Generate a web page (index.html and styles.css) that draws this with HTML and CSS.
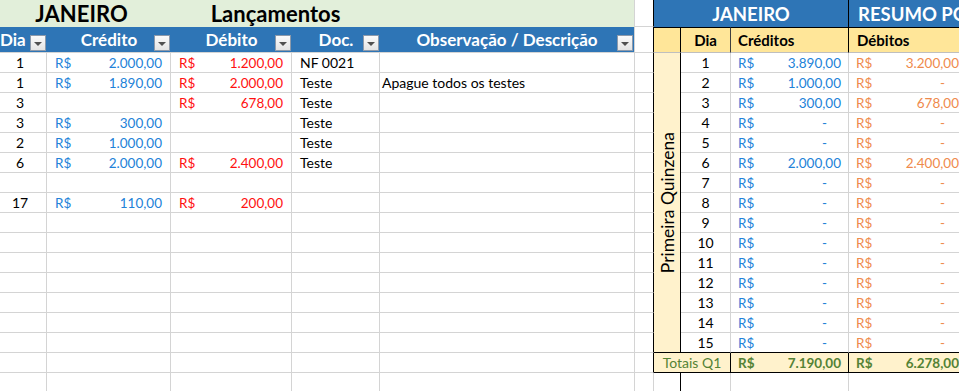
FILE: index.html
```html
<!DOCTYPE html>
<html lang="pt-BR">
<head>
<meta charset="utf-8">
<title>Janeiro - Lançamentos</title>
<link rel="stylesheet" href="styles.css">
</head>
<body>
<div class="page">
  <div class="sheet left">
    <div class="c title t-jan">JANEIRO</div>
    <div class="c title t-lanc">Lançamentos</div>
    <div class="c title t-end"></div>
    <div class="c gap"></div>

    <div class="c hd hd-dia">Dia<span class="filter"></span></div>
    <div class="c hd">Crédito<span class="filter"></span></div>
    <div class="c hd">Débito<span class="filter"></span></div>
    <div class="c hd">Doc.<span class="filter"></span></div>
    <div class="c hd hd-last">Observação / Descrição<span class="filter"></span></div>
    <div class="c gap"></div>

    <div class="c num">1</div>
    <div class="c money cred"><span>R$</span><span>2.000,00</span></div>
    <div class="c money deb"><span>R$</span><span>1.200,00</span></div>
    <div class="c doc">NF 0021</div>
    <div class="c obs"></div>
    <div class="c gap"></div>

    <div class="c num">1</div>
    <div class="c money cred"><span>R$</span><span>1.890,00</span></div>
    <div class="c money deb"><span>R$</span><span>2.000,00</span></div>
    <div class="c doc">Teste</div>
    <div class="c obs">Apague todos os testes</div>
    <div class="c gap"></div>

    <div class="c num">3</div>
    <div class="c money cred"></div>
    <div class="c money deb"><span>R$</span><span>678,00</span></div>
    <div class="c doc">Teste</div>
    <div class="c obs"></div>
    <div class="c gap"></div>

    <div class="c num">3</div>
    <div class="c money cred"><span>R$</span><span>300,00</span></div>
    <div class="c money deb"></div>
    <div class="c doc">Teste</div>
    <div class="c obs"></div>
    <div class="c gap"></div>

    <div class="c num">2</div>
    <div class="c money cred"><span>R$</span><span>1.000,00</span></div>
    <div class="c money deb"></div>
    <div class="c doc">Teste</div>
    <div class="c obs"></div>
    <div class="c gap"></div>

    <div class="c num">6</div>
    <div class="c money cred"><span>R$</span><span>2.000,00</span></div>
    <div class="c money deb"><span>R$</span><span>2.400,00</span></div>
    <div class="c doc">Teste</div>
    <div class="c obs"></div>
    <div class="c gap"></div>

    <div class="c num"></div><div class="c"></div><div class="c"></div><div class="c"></div><div class="c"></div><div class="c gap"></div>

    <div class="c num">17</div>
    <div class="c money cred"><span>R$</span><span>110,00</span></div>
    <div class="c money deb"><span>R$</span><span>200,00</span></div>
    <div class="c doc"></div>
    <div class="c obs"></div>
    <div class="c gap"></div>

    <div class="c num"></div><div class="c"></div><div class="c"></div><div class="c"></div><div class="c"></div><div class="c gap"></div>
    <div class="c num"></div><div class="c"></div><div class="c"></div><div class="c"></div><div class="c"></div><div class="c gap"></div>
    <div class="c num"></div><div class="c"></div><div class="c"></div><div class="c"></div><div class="c"></div><div class="c gap"></div>
    <div class="c num"></div><div class="c"></div><div class="c"></div><div class="c"></div><div class="c"></div><div class="c gap"></div>
    <div class="c num"></div><div class="c"></div><div class="c"></div><div class="c"></div><div class="c"></div><div class="c gap"></div>
    <div class="c num"></div><div class="c"></div><div class="c"></div><div class="c"></div><div class="c"></div><div class="c gap"></div>
    <div class="c num"></div><div class="c"></div><div class="c"></div><div class="c"></div><div class="c"></div><div class="c gap"></div>
    <div class="c num"></div><div class="c"></div><div class="c"></div><div class="c"></div><div class="c"></div><div class="c gap"></div>
    <div class="c num"></div><div class="c"></div><div class="c"></div><div class="c"></div><div class="c"></div><div class="c gap gap-end"></div>
  </div>

  <div class="sheet right">
    <div class="c bh bh-jan">JANEIRO</div>
    <div class="c bh bh-res">RESUMO POR QUINZENA</div>

    <div class="c yh yh-blank"></div>
    <div class="c yh yh-dia">Dia</div>
    <div class="c yh yh-cred">Créditos</div>
    <div class="c yh yh-deb">Débitos</div>

    <div class="c vlabel"><span>Primeira Quinzena</span></div>

    <div class="c day">1</div><div class="c rm cred"><span>R$</span><span>3.890,00</span></div><div class="c rm orng"><span>R$</span><span>3.200,00</span></div>
    <div class="c day">2</div><div class="c rm cred"><span>R$</span><span>1.000,00</span></div><div class="c rm orng"><span>R$</span><span class="dash">-</span></div>
    <div class="c day">3</div><div class="c rm cred"><span>R$</span><span>300,00</span></div><div class="c rm orng"><span>R$</span><span>678,00</span></div>
    <div class="c day">4</div><div class="c rm cred"><span>R$</span><span class="dash">-</span></div><div class="c rm orng"><span>R$</span><span class="dash">-</span></div>
    <div class="c day">5</div><div class="c rm cred"><span>R$</span><span class="dash">-</span></div><div class="c rm orng"><span>R$</span><span class="dash">-</span></div>
    <div class="c day">6</div><div class="c rm cred"><span>R$</span><span>2.000,00</span></div><div class="c rm orng"><span>R$</span><span>2.400,00</span></div>
    <div class="c day">7</div><div class="c rm cred"><span>R$</span><span class="dash">-</span></div><div class="c rm orng"><span>R$</span><span class="dash">-</span></div>
    <div class="c day">8</div><div class="c rm cred"><span>R$</span><span class="dash">-</span></div><div class="c rm orng"><span>R$</span><span class="dash">-</span></div>
    <div class="c day">9</div><div class="c rm cred"><span>R$</span><span class="dash">-</span></div><div class="c rm orng"><span>R$</span><span class="dash">-</span></div>
    <div class="c day">10</div><div class="c rm cred"><span>R$</span><span class="dash">-</span></div><div class="c rm orng"><span>R$</span><span class="dash">-</span></div>
    <div class="c day">11</div><div class="c rm cred"><span>R$</span><span class="dash">-</span></div><div class="c rm orng"><span>R$</span><span class="dash">-</span></div>
    <div class="c day">12</div><div class="c rm cred"><span>R$</span><span class="dash">-</span></div><div class="c rm orng"><span>R$</span><span class="dash">-</span></div>
    <div class="c day">13</div><div class="c rm cred"><span>R$</span><span class="dash">-</span></div><div class="c rm orng"><span>R$</span><span class="dash">-</span></div>
    <div class="c day">14</div><div class="c rm cred"><span>R$</span><span class="dash">-</span></div><div class="c rm orng"><span>R$</span><span class="dash">-</span></div>
    <div class="c day qend">15</div><div class="c rm cred qend"><span>R$</span><span class="dash">-</span></div><div class="c rm orng qend"><span>R$</span><span class="dash">-</span></div>

    <div class="c tot tot-lbl">Totais Q1</div>
    <div class="c tot tot-val"><span>R$</span><span>7.190,00</span></div>
    <div class="c tot tot-val"><span>R$</span><span>6.278,00</span></div>

    <div class="c after-a"></div>
    <div class="c"></div>
    <div class="c"></div>
    <div class="c"></div>
  </div>
</div>
</body>
</html>
```
FILE: styles.css
```css
* { box-sizing: border-box; }
html, body { margin: 0; padding: 0; }
body {
  width: 959px;
  height: 391px;
  overflow: hidden;
  background: #fff;
  font-family: Lato, "Liberation Sans", sans-serif;
  font-size: 14px;
  color: #000;
}
.page { display: flex; }
.sheet {
  display: grid;
  grid-template-rows: 27px 26px repeat(17, 20px);
  flex: none;
}
.left { grid-template-columns: 47px 124px 121px 88px 255px 19px; }
.right { grid-template-columns: 27px 50px 118px 118px; }

.c {
  border-right: 1px solid #d4d4d4;
  border-bottom: 1px solid #d4d4d4;
  display: flex;
  align-items: center;
  white-space: nowrap;
  overflow: hidden;
}

/* title row */
.title {
  background: #e2efda;
  border: 0;
  font-weight: bold;
  font-size: 22px;
  justify-content: center;
}
.t-jan { grid-column: span 2; padding-right: 8px; }
.t-lanc { grid-column: span 2; }
.t-end { border-right: 1px solid #d4d4d4; }

/* header row */
.hd {
  position: relative;
  background: #2e75b6;
  color: #fff;
  font-weight: bold;
  font-size: 17px;
  justify-content: center;
  border-right: 0;
}
.hd-dia { justify-content: flex-start; }
.hd-last { border-right: 1px solid #d4d4d4; }
.filter {
  position: absolute;
  right: 1px;
  bottom: 1px;
  width: 16px;
  height: 16px;
  border: 1px solid #8d9aab;
  background: linear-gradient(#fbfbfb, #e4e4e4);
  display: flex;
  align-items: center;
  justify-content: center;
}
.filter::after {
  content: "";
  border-left: 4px solid transparent;
  border-right: 4px solid transparent;
  border-top: 4px solid #505050;
  margin-top: 1px;
}

.gap { border-right: 1px solid #000; }
.gap-end { border-right-color: #d4d4d4; }

/* data */
.num { justify-content: center; padding-right: 6px; }
.money { justify-content: space-between; padding: 0 8px 0 8px; font-size: 13.5px; }
.cred { color: #2282d8; }
.deb { color: #ff1010; }
.orng { color: #ef8a4c; }
.doc { padding-left: 8px; }
.obs { padding-left: 2px; }

/* right block */
.bh {
  background: #2e75b6;
  color: #fff;
  font-weight: bold;
  font-size: 18.5px;
  border-bottom: 0;
}
.bh-jan { grid-column: span 3; justify-content: center; border-right: 1px solid #000; }
.bh-res { padding-left: 9px; border-right: 0; }

.yh {
  background: #ffe699;
  font-weight: bold;
  font-size: 15px;
  border-top: 1px solid #000;
  border-right: 1px solid #000;
  border-bottom: 1px solid #bfbfbf;
}
.yh-dia { justify-content: center; border-right-color: #404040; }
.yh-cred { padding-left: 7px; }
.yh-deb { padding-left: 8px; border-right: 0; }

.vlabel {
  grid-row: span 15;
  background: #fff2cc;
  border-right: 1px solid #000;
  border-bottom: 1px solid #000;
  justify-content: center;
}
.vlabel span {
  writing-mode: vertical-rl;
  transform: rotate(180deg);
  font-size: 17.5px;
}
.day { justify-content: center; }
.rm { justify-content: space-between; padding: 0 7px; font-size: 13.5px; }
.dash { margin-right: 14px; }
.qend { border-bottom-color: #000; }

.tot {
  background: #fff2cc;
  color: #548235;
  border-right: 1px solid #000;
  border-bottom: 1px solid #000;
}
.tot-lbl { grid-column: span 2; justify-content: center; }
.tot-val { font-weight: bold; justify-content: space-between; padding: 0 7px; font-size: 13.5px; }
.after-a { border-right: 1px solid #000; }
```
